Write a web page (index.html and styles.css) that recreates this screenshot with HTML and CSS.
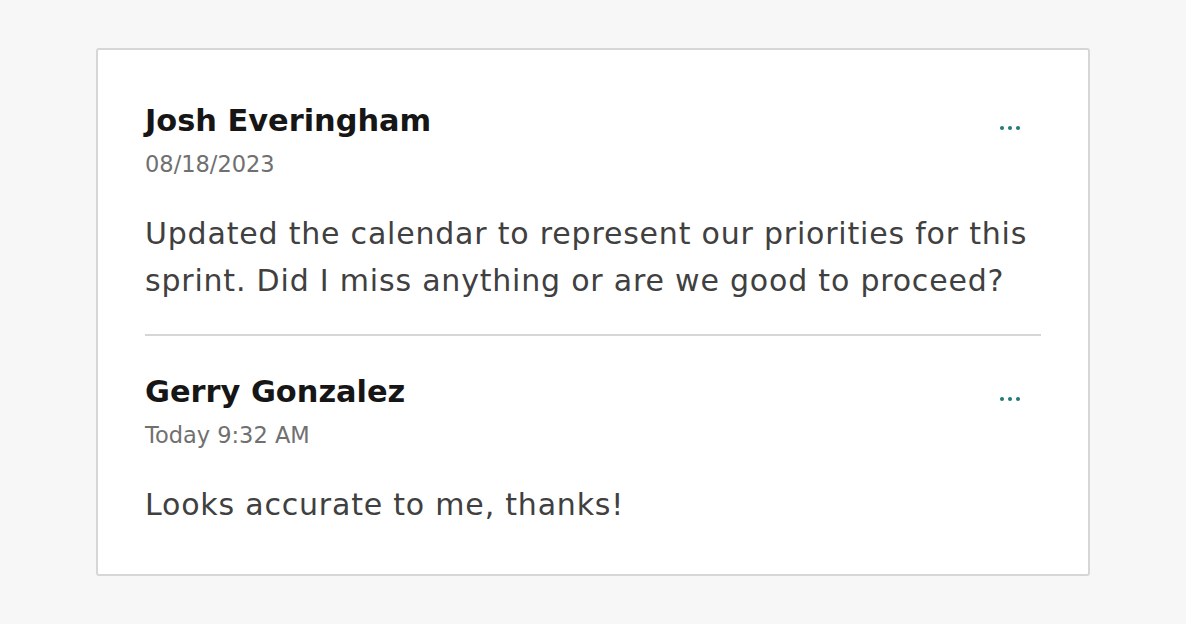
FILE: index.html
```html
<!DOCTYPE html>
<html>
<head>
<meta charset="utf-8">
<link rel="stylesheet" href="styles.css">
</head>
<body>
<div class="page">
  <div class="card">
    <div class="comment">
      <div class="head">
        <div class="meta">
          <div class="name">Josh Everingham</div>
          <div class="date">08/18/2023</div>
        </div>
        <button class="more" aria-label="More"><span></span><span></span><span></span></button>
      </div>
      <p class="text">Updated the calendar to represent our priorities for this sprint. Did I miss anything or are we good to proceed?</p>
    </div>
    <div class="comment">
      <div class="head">
        <div class="meta">
          <div class="name">Gerry Gonzalez</div>
          <div class="date">Today 9:32 AM</div>
        </div>
        <button class="more" aria-label="More"><span></span><span></span><span></span></button>
      </div>
      <p class="text">Looks accurate to me, thanks!</p>
    </div>
  </div>
</div>
</body>
</html>
```
FILE: styles.css
```css
html, body {
  margin: 0;
  padding: 0;
  background: #f7f7f7;
}
.page {
  padding: 48px 96px 0 96px;
  font-family: "DejaVu Sans", sans-serif;
}
.card {
  box-sizing: border-box;
  width: 994px;
  background: #fff;
  border: 2px solid #d6d6d6;
  border-radius: 3px;
  padding: 51px 47px 46px 47px;
}
.comment + .comment {
  border-top: 2px solid #d6d6d6;
  margin-top: 30px;
  padding-top: 36px;
}
.head {
  display: flex;
  justify-content: space-between;
  align-items: flex-start;
}
.name {
  font-size: 30.4px;
  font-weight: bold;
  line-height: 40px;
  color: #161616;
}
.date {
  margin-top: 7px;
  font-size: 22.5px;
  line-height: 32px;
  color: #707070;
}
.more {
  display: flex;
  gap: 4px;
  border: 0;
  background: none;
  padding: 0;
  margin: 25px 21px 0 0;
  cursor: pointer;
}
.more span {
  width: 4px;
  height: 4px;
  border-radius: 50%;
  background: #1e7b76;
}
.text {
  margin: 30px 0 0 0;
  font-size: 30px;
  line-height: 47px;
  letter-spacing: 0.8px;
  color: #404040;
}
```
